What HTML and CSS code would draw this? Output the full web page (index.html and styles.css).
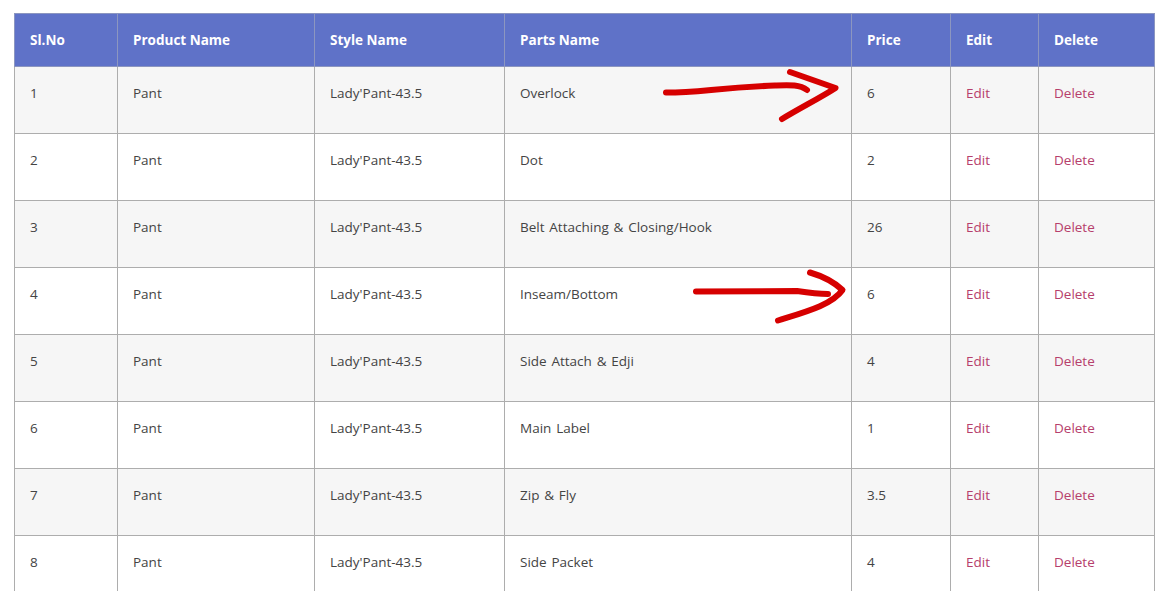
FILE: index.html
```html
<!DOCTYPE html>
<html lang="en">
<head>
<meta charset="utf-8">
<title>Parts price list</title>
<link rel="stylesheet" href="styles.css">
</head>
<body>
<div class="wrap">
<table class="grid">
<colgroup>
<col class="c1"><col class="c2"><col class="c3"><col class="c4"><col class="c5"><col class="c6"><col class="c7">
</colgroup>
<thead>
<tr><th>Sl.No</th><th>Product Name</th><th>Style Name</th><th>Parts Name</th><th>Price</th><th>Edit</th><th>Delete</th></tr>
</thead>
<tbody>
<tr><td>1</td><td>Pant</td><td>Lady'Pant-43.5</td><td>Overlock</td><td>6</td><td><a href="#">Edit</a></td><td><a href="#">Delete</a></td></tr>
<tr><td>2</td><td>Pant</td><td>Lady'Pant-43.5</td><td>Dot</td><td>2</td><td><a href="#">Edit</a></td><td><a href="#">Delete</a></td></tr>
<tr><td>3</td><td>Pant</td><td>Lady'Pant-43.5</td><td>Belt Attaching &amp; Closing/Hook</td><td>26</td><td><a href="#">Edit</a></td><td><a href="#">Delete</a></td></tr>
<tr><td>4</td><td>Pant</td><td>Lady'Pant-43.5</td><td>Inseam/Bottom</td><td>6</td><td><a href="#">Edit</a></td><td><a href="#">Delete</a></td></tr>
<tr><td>5</td><td>Pant</td><td>Lady'Pant-43.5</td><td>Side Attach &amp; Edji</td><td>4</td><td><a href="#">Edit</a></td><td><a href="#">Delete</a></td></tr>
<tr><td>6</td><td>Pant</td><td>Lady'Pant-43.5</td><td>Main Label</td><td>1</td><td><a href="#">Edit</a></td><td><a href="#">Delete</a></td></tr>
<tr><td>7</td><td>Pant</td><td>Lady'Pant-43.5</td><td>Zip &amp; Fly</td><td>3.5</td><td><a href="#">Edit</a></td><td><a href="#">Delete</a></td></tr>
<tr><td>8</td><td>Pant</td><td>Lady'Pant-43.5</td><td>Side Packet</td><td>4</td><td><a href="#">Edit</a></td><td><a href="#">Delete</a></td></tr>
</tbody>
</table>
<svg class="marks" width="1167" height="591" viewBox="0 0 1167 591" aria-hidden="true">
<path d="M666 92.500C700 92.500 715 88 775 85.500C790 85 800 84.500 807 90"/>
<path d="M790 72L835.500 88C820 98 800 108 782 119"/>
<path d="M696 291.500L797 291C810 293 820 294 828 294"/>
<path d="M810 272.500C822 276 834 282 842.500 290C832 305 805 312 778 320.500"/>
</svg>
</div>
</body>
</html>
```
FILE: styles.css
```css
html, body {
  margin: 0;
  height: 591px;
  overflow: hidden;
  background: #fff;
}
.wrap {
  position: relative;
  padding: 13px 13px 0 14px;
}
.grid {
  border-collapse: collapse;
  table-layout: fixed;
  width: 1140px;
  font-family: "Open Sans", "Noto Sans", sans-serif;
  font-size: 13.5px;
  word-spacing: 1.3px;
  color: #444;
}
.c1 { width: 103px; }
.c2 { width: 197px; }
.c3 { width: 190px; }
.c4 { width: 347px; }
.c5 { width: 99px; }
.c6 { width: 88px; }
.c7 { width: 116px; }
.grid th, .grid td {
  border: 1px solid #adadad;
  padding: 0 15px;
  text-align: left;
}
.grid th {
  height: 52px;
  background: #5f72c8;
  color: #fff;
  font-weight: 700;
  word-spacing: 0;
  border-color: #8c96c0;
}
.grid thead tr {
  border: 1px solid #adadad;
}
.grid td {
  height: 67px;
  padding-bottom: 14px;
  box-sizing: border-box;
}
.grid tbody tr:nth-child(odd) {
  background: #f6f6f6;
}
.grid a {
  color: #b6406c;
  text-decoration: none;
}
.marks {
  position: absolute;
  top: 0;
  left: 0;
  fill: none;
  stroke: #d60000;
  stroke-width: 6;
  stroke-linecap: round;
  stroke-linejoin: round;
}
```
